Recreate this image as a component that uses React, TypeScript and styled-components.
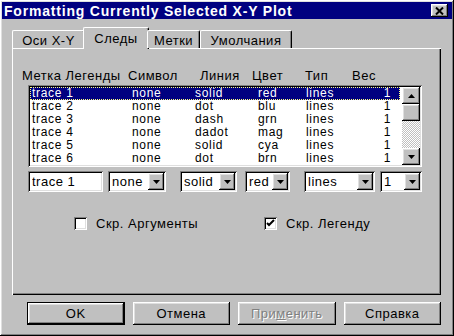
import React from 'react';
import styled, { createGlobalStyle, css } from 'styled-components';

const GlobalStyle = createGlobalStyle`
  html, body {
    margin: 0;
    padding: 0;
    background: #c0c0c0;
  }
  body {
    font-family: "Liberation Sans", Arial, sans-serif;
    font-size: 13px;
    color: #000;
  }
`;

const raised = css`
  box-shadow: inset -1px -1px #000, inset 1px 1px #fff, inset -2px -2px #808080,
    inset 2px 2px #dfdfdf;
`;

const sunken = css`
  box-shadow: inset 1px 1px #808080, inset -1px -1px #fff, inset 2px 2px #000,
    inset -2px -2px #dfdfdf;
`;

const Window = styled.div`
  width: 454px;
  height: 336px;
  box-sizing: border-box;
  padding: 2px;
  background: #c0c0c0;
  ${raised};
  display: flex;
  flex-direction: column;
`;

const TitleBar = styled.div`
  height: 17px;
  background: #000080;
  color: #fff;
  display: flex;
  align-items: center;
  justify-content: space-between;
  padding: 0 4px 0 2px;
  font-weight: bold;
  font-size: 14px;
  letter-spacing: 0.8px;
`;

const CloseButton = styled.div`
  width: 17px;
  height: 13px;
  background: #c0c0c0;
  ${raised};
  display: flex;
  align-items: center;
  justify-content: center;
`;

const Body = styled.div`
  flex: 1;
  display: flex;
  flex-direction: column;
  padding: 8px 11px 0 10px;
`;

const TabStrip = styled.div`
  display: flex;
  align-items: flex-end;
  height: 21px;
  position: relative;
  z-index: 1;
`;

const Tab = styled.div<{ $w: number; $active?: boolean }>`
  box-sizing: border-box;
  width: ${(p) => p.$w + (p.$active ? 4 : 0)}px;
  height: ${(p) => (p.$active ? 22 : 18)}px;
  margin: 0 ${(p) => (p.$active ? -2 : 0)}px ${(p) => (p.$active ? -1 : 0)}px;
  background: #c0c0c0;
  border-top: 1px solid #fff;
  border-left: 1px solid #fff;
  border-right: 1px solid #000;
  border-radius: 2px 2px 0 0;
  box-shadow: inset -1px 0 #808080;
  display: flex;
  justify-content: center;
  padding-top: ${(p) => (p.$active ? 3 : 2)}px;
  letter-spacing: 0.5px;
`;

const Panel = styled.div`
  height: 247px;
  box-sizing: border-box;
  background: #c0c0c0;
  box-shadow: inset 1px 1px #fff, inset -1px -1px #000, inset -2px -2px #808080;
  padding: 21px 0 0 10px;
  display: flex;
  flex-direction: column;
`;

const HeaderRow = styled.div`
  display: grid;
  grid-template-columns: 106px 72px 52px 53px 47px auto;
  height: 14px;
  line-height: 14px;
  margin-bottom: 2px;
  letter-spacing: 0.5px;
`;

const ListBox = styled.div`
  margin-left: 6px;
  width: 394px;
  height: 82px;
  box-sizing: border-box;
  padding: 2px;
  background: #fff;
  ${sunken};
  display: flex;
`;

const Rows = styled.div`
  flex: 1;
  padding-right: 2px;
`;

const Row = styled.div<{ $selected?: boolean }>`
  display: grid;
  grid-template-columns: 100px 63px 63px 48px 50px 35px;
  height: 13px;
  line-height: 13px;
  font-size: 12px;
  padding-left: 2px;
  letter-spacing: 0.7px;
  ${(p) =>
    p.$selected &&
    css`
      background: #000080;
      color: #fff;
      outline: 1px dotted #ffff80;
      outline-offset: -1px;
    `}
`;

const RightCell = styled.span`
  text-align: right;
`;

const ScrollBar = styled.div`
  width: 18px;
  display: flex;
  flex-direction: column;
  background-color: #c0c0c0;
  background-image: conic-gradient(#fff 25%, transparent 0 50%, #fff 0 75%, transparent 0);
  background-size: 2px 2px;
`;

const ScrollButton = styled.div<{ $h?: number }>`
  height: ${(p) => p.$h ?? 17}px;
  background: #c0c0c0;
  ${raised};
  display: flex;
  align-items: center;
  justify-content: center;
`;

const Spacer = styled.div`
  flex: 1;
`;

const EditRow = styled.div`
  display: flex;
  margin: 4px 0 0 6px;
  height: 21px;
`;

const Field = styled.div<{ $w: number; $ml?: number }>`
  box-sizing: border-box;
  width: ${(p) => p.$w}px;
  margin-left: ${(p) => p.$ml ?? 0}px;
  height: 21px;
  background: #fff;
  ${sunken};
  display: flex;
  align-items: center;
  padding: 2px 2px 2px 4px;
  letter-spacing: 0.5px;
`;

const FieldText = styled.span`
  flex: 1;
  overflow: hidden;
  white-space: nowrap;
`;

const DropButton = styled.div`
  width: 16px;
  height: 17px;
  background: #c0c0c0;
  ${raised};
  display: flex;
  align-items: center;
  justify-content: center;
`;

const CheckRow = styled.div`
  display: grid;
  grid-template-columns: 190px auto;
  margin-top: 24px;
  padding-left: 52px;
`;

const CheckItem = styled.label`
  display: flex;
  align-items: center;
  gap: 9px;
  letter-spacing: 0.5px;
`;

const CheckBox = styled.span`
  width: 13px;
  height: 13px;
  box-sizing: border-box;
  background: #fff;
  ${sunken};
  display: flex;
  align-items: center;
  justify-content: center;
`;

const ButtonRow = styled.div`
  display: flex;
  gap: 8px;
  padding: 7px 0 0 15px;
`;

const Button = styled.div<{ $default?: boolean; $disabled?: boolean }>`
  width: 98px;
  height: 23px;
  box-sizing: border-box;
  background: #c0c0c0;
  display: flex;
  align-items: center;
  justify-content: center;
  letter-spacing: 0.5px;
  ${raised};
  ${(p) =>
    p.$default &&
    css`
      border: 1px solid #000;
    `}
  ${(p) =>
    p.$disabled &&
    css`
      color: #808080;
      text-shadow: 1px 1px #fff;
    `}
`;

const DownArrow = () => (
  <svg width="7" height="4" viewBox="0 0 7 4">
    <path d="M0 0h7L3.5 4z" fill="#000" />
  </svg>
);

const UpArrow = () => (
  <svg width="7" height="4" viewBox="0 0 7 4">
    <path d="M0 4h7L3.5 0z" fill="#000" />
  </svg>
);

const traces = [
  ['trace 1', 'none', 'solid', 'red', 'lines', '1'],
  ['trace 2', 'none', 'dot', 'blu', 'lines', '1'],
  ['trace 3', 'none', 'dash', 'grn', 'lines', '1'],
  ['trace 4', 'none', 'dadot', 'mag', 'lines', '1'],
  ['trace 5', 'none', 'solid', 'cya', 'lines', '1'],
  ['trace 6', 'none', 'dot', 'brn', 'lines', '1'],
];

const combos: { value: string; w: number; ml: number }[] = [
  { value: 'none', w: 58, ml: 5 },
  { value: 'solid', w: 57, ml: 14 },
  { value: 'red', w: 45, ml: 8 },
  { value: 'lines', w: 71, ml: 14 },
  { value: '1', w: 42, ml: 5 },
];

export default function App() {
  return (
    <>
      <GlobalStyle />
      <Window>
        <TitleBar>
          <span>Formatting Currently Selected X-Y Plot</span>
          <CloseButton>
            <svg width="9" height="8" viewBox="0 0 9 8">
              <path d="M1 0.5l7 7M8 0.5l-7 7" stroke="#000" strokeWidth="2" />
            </svg>
          </CloseButton>
        </TitleBar>

        <Body>
          <TabStrip>
            <Tab $w={73}>Оси X-Y</Tab>
            <Tab $w={62} $active>
              Следы
            </Tab>
            <Tab $w={53}>Метки</Tab>
            <Tab $w={92}>Умолчания</Tab>
          </TabStrip>

          <Panel>
            <HeaderRow>
              <span>Метка Легенды</span>
              <span>Символ</span>
              <span>Линия</span>
              <span>Цвет</span>
              <span>Тип</span>
              <span>Вес</span>
            </HeaderRow>

            <ListBox>
              <Rows>
                {traces.map((t, i) => (
                  <Row key={t[0]} $selected={i === 0}>
                    <span>{t[0]}</span>
                    <span>{t[1]}</span>
                    <span>{t[2]}</span>
                    <span>{t[3]}</span>
                    <span>{t[4]}</span>
                    <RightCell>{t[5]}</RightCell>
                  </Row>
                ))}
              </Rows>
              <ScrollBar>
                <ScrollButton>
                  <UpArrow />
                </ScrollButton>
                <ScrollButton $h={17} />
                <Spacer />
                <ScrollButton>
                  <DownArrow />
                </ScrollButton>
              </ScrollBar>
            </ListBox>

            <EditRow>
              <Field $w={75}>
                <FieldText>trace 1</FieldText>
              </Field>
              {combos.map((c) => (
                <Field key={c.value} $w={c.w} $ml={c.ml}>
                  <FieldText>{c.value}</FieldText>
                  <DropButton>
                    <DownArrow />
                  </DropButton>
                </Field>
              ))}
            </EditRow>

            <CheckRow>
              <CheckItem>
                <CheckBox />
                Скр. Аргументы
              </CheckItem>
              <CheckItem>
                <CheckBox>
                  <svg width="9" height="9" viewBox="0 0 9 9">
                    <path d="M1 4l2 2 5-5" stroke="#000" strokeWidth="2" fill="none" />
                  </svg>
                </CheckBox>
                Скр. Легенду
              </CheckItem>
            </CheckRow>
          </Panel>

          <ButtonRow>
            <Button $default>OK</Button>
            <Button>Отмена</Button>
            <Button $disabled>
              <span>
                При<u>м</u>енить
              </span>
            </Button>
            <Button>Справка</Button>
          </ButtonRow>
        </Body>
      </Window>
    </>
  );
}
